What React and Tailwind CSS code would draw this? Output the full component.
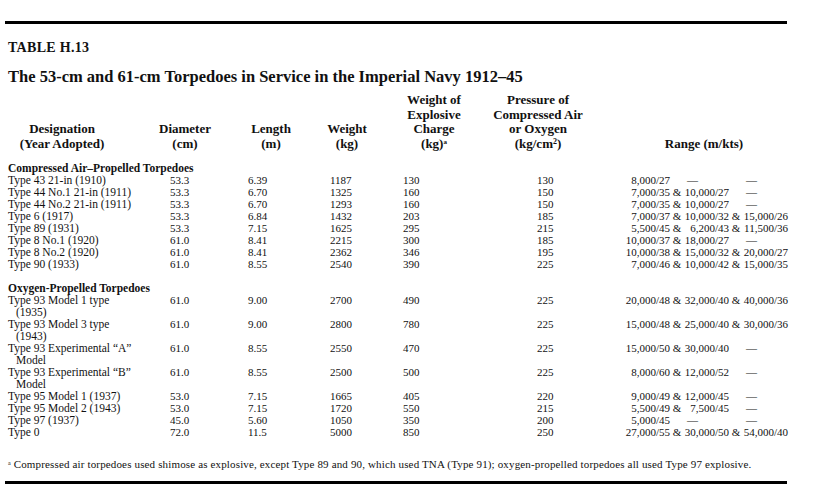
import React from 'react'

// data columns: designation | diameter | length | weight | charge | pressure | range
const COLS = 'grid grid-cols-[162px_78px_82px_73px_134px_88px_1fr] items-baseline'

const compressed = [
  ['Type 43 21-in (1910)', '53.3', '6.39', '1187', '130', '130', ['8,000/27', '—', '—']],
  ['Type 44 No.1 21-in (1911)', '53.3', '6.70', '1325', '160', '150', ['7,000/35', '10,000/27', '—']],
  ['Type 44 No.2 21-in (1911)', '53.3', '6.70', '1293', '160', '150', ['7,000/35', '10,000/27', '—']],
  ['Type 6 (1917)', '53.3', '6.84', '1432', '203', '185', ['7,000/37', '10,000/32', '15,000/26']],
  ['Type 89 (1931)', '53.3', '7.15', '1625', '295', '215', ['5,500/45', '6,200/43', '11,500/36']],
  ['Type 8 No.1 (1920)', '61.0', '8.41', '2215', '300', '185', ['10,000/37', '18,000/27', '—']],
  ['Type 8 No.2 (1920)', '61.0', '8.41', '2362', '346', '195', ['10,000/38', '15,000/32', '20,000/27']],
  ['Type 90 (1933)', '61.0', '8.55', '2540', '390', '225', ['7,000/46', '10,000/42', '15,000/35']],
]

const oxygen = [
  [['Type 93 Model 1 type', '(1935)'], '61.0', '9.00', '2700', '490', '225', ['20,000/48', '32,000/40', '40,000/36']],
  [['Type 93 Model 3 type', '(1943)'], '61.0', '9.00', '2800', '780', '225', ['15,000/48', '25,000/40', '30,000/36']],
  [['Type 93 Experimental “A”', 'Model'], '61.0', '8.55', '2550', '470', '225', ['15,000/50', '30,000/40', '—']],
  [['Type 93 Experimental “B”', 'Model'], '61.0', '8.55', '2500', '500', '225', ['8,000/60', '12,000/52', '—']],
  ['Type 95 Model 1 (1937)', '53.0', '7.15', '1665', '405', '220', ['9,000/49', '12,000/45', '—']],
  ['Type 95 Model 2 (1943)', '53.0', '7.15', '1720', '550', '215', ['5,500/49', '7,500/45', '—']],
  ['Type 97 (1937)', '45.0', '5.60', '1050', '350', '200', ['5,000/45', '—', '—']],
  ['Type 0', '72.0', '11.5', '5000', '850', '250', ['27,000/55', '30,000/50', '54,000/40']],
]

function Slot({ value }) {
  if (value === '—') {
    return <span className="w-[45px] pl-[3px]">—</span>
  }
  return <span className="w-[45px] text-right">{value}</span>
}

function Range({ parts }) {
  const [a, b, c] = parts
  return (
    <div className="flex whitespace-nowrap">
      <Slot value={a} />
      <span className="w-[14px] text-center">{b !== '—' ? '&' : ''}</span>
      <Slot value={b} />
      <span className="w-[14px] text-center">{c !== '—' ? '&' : ''}</span>
      <Slot value={c} />
    </div>
  )
}

function Row({ row }) {
  const [name, dia, len, wt, charge, press, range] = row
  return (
    <div className={`${COLS} leading-[12px]`}>
      <div className="whitespace-nowrap text-[11.5px] leading-[12px]">
        {Array.isArray(name) ? (
          <>
            <div>{name[0]}</div>
            <div className="pl-[8px]">{name[1]}</div>
          </>
        ) : name}
      </div>
      <div>{dia}</div>
      <div>{len}</div>
      <div>{wt}</div>
      <div>{charge}</div>
      <div>{press}</div>
      <Range parts={range} />
    </div>
  )
}

function Head({ w, children }) {
  return (
    <div className={`${w} flex justify-center text-center whitespace-nowrap`}>
      <div>{children}</div>
    </div>
  )
}

export default function App() {
  return (
    <div className="w-[837px] h-[500px] overflow-hidden bg-white text-[#111] font-['Liberation_Serif',serif] pt-[21px] pl-[5px]">
      <div className="w-[782px] h-[3px] bg-black" />

      <div className="pl-[3px]">
        <div className="mt-[16px] text-[14px] leading-[16px] font-bold tracking-[0.3px]">TABLE H.13</div>
        <h1 className="mt-[12px] text-[16.5px] leading-[18px] font-bold">
          The 53-cm and 61-cm Torpedoes in Service in the Imperial Navy 1912–45
        </h1>

        {/* column headings */}
        <div className="mt-[7px] flex items-end text-[13px] leading-[14.5px] font-bold">
          <Head w="w-[108px]">Designation<br />(Year Adopted)</Head>
          <Head w="w-[138px]">Diameter<br />(cm)</Head>
          <Head w="w-[34px]">Length<br />(m)</Head>
          <Head w="w-[118px]">Weight<br />(kg)</Head>
          <Head w="w-[56px]">
            Weight of<br />Explosive<br />Charge<br />(kg)<sup className="text-[7px]">a</sup>
          </Head>
          <Head w="w-[152px]">
            Pressure of<br />Compressed Air<br />or Oxygen<br />(kg/cm<sup className="text-[8px]">2</sup>)
          </Head>
          <Head w="w-[180px]">Range (m/kts)</Head>
        </div>

        <div className="text-[11px] leading-[12px]">
          <div className="mt-[11px] font-bold text-[11.5px] leading-[12px]">Compressed Air–Propelled Torpedoes</div>
          {compressed.map((r, i) => <Row key={i} row={r} />)}

          <div className="mt-[12px] font-bold text-[11.5px] leading-[12px]">Oxygen-Propelled Torpedoes</div>
          {oxygen.map((r, i) => <Row key={i} row={r} />)}
        </div>

        <p className="mt-[20px] text-[11px] leading-[12px] tracking-[0.15px] whitespace-nowrap">
          <sup className="text-[6px]">a</sup> Compressed air torpedoes used shimose as explosive, except Type 89 and 90, which used TNA (Type 91); oxygen-propelled torpedoes all used Type 97 explosive.
        </p>
      </div>

      <div className="mt-[11px] w-[782px] h-[3px] bg-black" />
    </div>
  )
}
